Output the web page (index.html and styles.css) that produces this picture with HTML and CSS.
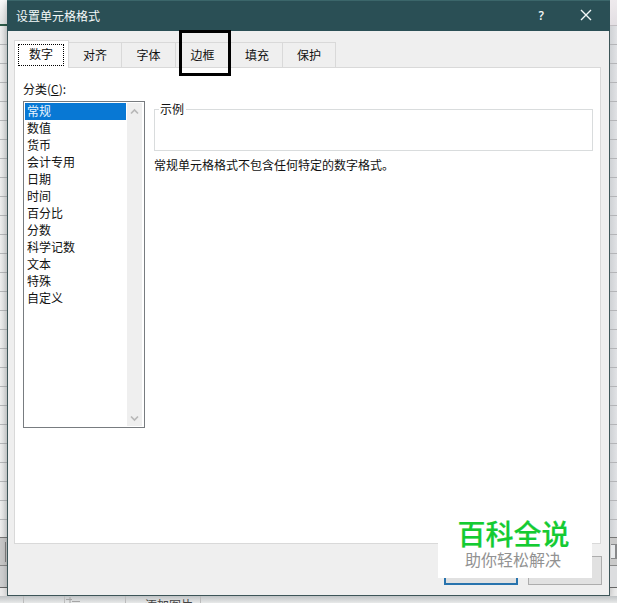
FILE: index.html
```html
<!DOCTYPE html>
<html lang="zh-CN">
<head>
<meta charset="utf-8">
<title>设置单元格格式</title>
<link rel="stylesheet" href="styles.css">
</head>
<body>
<div class="workspace">
  <div class="sheet sheet-left"><div class="ribbon"></div><div class="rows"></div><div class="scroll-area"><i class="grip"></i></div><div class="below"></div></div>
  <main class="dialog">
    <header class="titlebar">
      <span class="title">设置单元格格式</span>
      <span class="help">?</span>
      <svg class="close" width="12" height="12" viewBox="0 0 12 12"><path d="M1 1 11 11M11 1 1 11"/></svg>
    </header>
    <nav class="tabs">
      <span class="tab active"><span class="focus">数字</span></span>
      <span class="tab">对齐</span>
      <span class="tab">字体</span>
      <span class="tab marked">边框</span>
      <span class="tab">填充</span>
      <span class="tab">保护</span>
    </nav>
    <section class="panel">
      <div class="category">
        <div class="label">分类(<u>C</u>):</div>
        <div class="listbox">
          <ul>
            <li class="selected">常规</li><li>数值</li><li>货币</li><li>会计专用</li><li>日期</li><li>时间</li><li>百分比</li><li>分数</li><li>科学记数</li><li>文本</li><li>特殊</li><li>自定义</li>
          </ul>
          <div class="scrollbar">
            <svg width="9" height="7" viewBox="0 0 9 7"><path d="M1 5.5 4.5 2 8 5.5"/></svg>
            <svg width="9" height="7" viewBox="0 0 9 7"><path d="M1 1.5 4.5 5 8 1.5"/></svg>
          </div>
        </div>
      </div>
      <div class="details">
        <div class="sample"><span class="legend">示例</span></div>
        <p>常规单元格格式不包含任何特定的数字格式。</p>
      </div>
    </section>
    <footer class="actions"><span class="button primary"></span><span class="button"></span></footer>
  </main>
  <div class="sheet sheet-right"><div class="ribbon"></div><div class="rows"></div><div class="scroll-area"><i class="grip"></i></div><div class="below"></div></div>
  <div class="taskbar"><i class="cell first"></i><i class="cell second"></i><i class="cell third"><svg width="16" height="7" viewBox="0 0 16 7"><path d="M1 3.5H7M5 1V7M7 5.5H15"/></svg></i><span>添加图片</span></div>
  <div class="watermark"><strong>百科全说</strong><span>助你轻松解决</span></div>
</div>
</body>
</html>
```

FILE: styles.css
```css
*, *::after { box-sizing: border-box; }
body {
  margin: 0;
  font: 12px/17px "Noto Sans CJK SC", sans-serif;
  color: #111;
  overflow: hidden;
}
.workspace {
  position: relative;
  width: 617px;
  height: 603px;
  display: grid;
  grid-template-columns: 7px 603px 7px;
  grid-template-rows: 596px 7px;
  background: #ececec;
}
.sheet { display: flex; flex-direction: column; }
.ribbon { height: 26px; background: linear-gradient(#fafafa, #e2e4e4); border-bottom: 2px solid #2c5a48; }
.rows {
  height: 511px;
  background: repeating-linear-gradient(to bottom, transparent 0 18px, #b6b8ba 18px 19px), linear-gradient(to right, #efefef, #dcdedf);
}
.sheet-right .ribbon { background: linear-gradient(#eeeaed, #e3dfe3); border-bottom: 1px solid #c2bec2; }
.sheet-right .rows {
  background: repeating-linear-gradient(to bottom, transparent 0 18px, #b4b5b8 18px 19px), linear-gradient(to right, #cfd2d5, #e1e2e5);
}
.scroll-area {
  display: flex;
  justify-content: flex-end;
  height: 29px;
  padding: 4px 1px 0 0;
  background: #c9c9c9;
  border-top: 1px solid #777;
  border-bottom: 1px solid #888;
}
.grip { width: 1px; height: 20px; background: #828282; }
.sheet-right .scroll-area { padding-right: 0; }
.sheet-right .grip { width: 6px; height: 15px; margin-top: 2px; background: #e8eaec; border: 1px solid #88898b; border-left: 0; border-right: 2px solid #88898b; }
.below { height: 22px; background: #cfd0d1; border-bottom: 1px solid #666; }
.sheet-right .below { background: #dcdddf; }
.dialog {
  display: flex;
  flex-direction: column;
  background: #efefef;
  border: 1px solid #3d5558;
  border-top: 0;
  box-shadow: 0 2px 7px #0004;
}
.titlebar {
  height: 31px;
  margin: 0 -1px;
  padding: 0 18px 2px 9px;
  display: flex;
  align-items: center;
  color: #f4f9f9;
  background: #2a4f55;
  border-top: 1px solid #3b666a;
}
.title { flex: 1; }
.help { margin-right: 36px; font: 600 12px/17px "Open Sans", sans-serif; }
.close { fill: none; stroke: #f4f9f9; stroke-width: 1.4; }
.tabs { display: flex; height: 37px; padding: 9px 0 0 6px; align-items: flex-end; }
.tab {
  height: 26px;
  width: 54px;
  border: 1px solid #d9d9d9;
  border-left: 0;
  text-align: center;
  line-height: 24px;
}
.tab:nth-child(2) { width: 53px; }
.tab:nth-child(5), .tab:nth-child(6) { width: 53px; }
.tab:nth-child(5) { padding-left: 2px; }
.tab.active {
  position: relative;
  z-index: 1;
  width: 55px;
  height: 28px;
  padding: 3px 4px 0 3px;
  background: #fff;
  border-left: 1px solid #d9d9d9;
  border-bottom: 0;
}
.focus { display: block; height: 22px; line-height: 18px; border: 1px dotted #000; }
.marked { position: relative; }
.marked::after { content: ""; position: absolute; left: 3px; top: -13px; width: 52px; height: 46px; border: 3px solid #000; }
.panel {
  display: flex;
  gap: 9px;
  width: 587px;
  height: 477px;
  margin: -1px 0 0 6px;
  padding: 12px 7px 0 8px;
  background: #fff;
  border: 1px solid #d9d9d9;
}
.category { width: 122px; }
.label { height: 21px; line-height: 17px; }
.listbox { display: flex; height: 327px; padding: 1px; border: 1px solid #787c80; }
ul { list-style: none; width: 101px; margin: 0 1px 0 0; padding: 0; }
li { height: 17px; padding-left: 2px; line-height: 16px; }
.selected { color: #e9f5ff; background: #0878d4; }
.scrollbar {
  width: 15px;
  padding: 5px 0 4px;
  display: flex;
  flex-direction: column;
  justify-content: space-between;
  align-items: center;
  background: #efefef;
}
.scrollbar path { fill: none; stroke: #b8b8b8; stroke-width: 1.7; }
.details { flex: 1; padding-top: 29px; }
.sample { height: 42px; border: 1px solid #d9dcdd; }
.legend { display: block; width: 27px; margin: -10px 0 0 4px; padding-left: 1px; background: #fff; }
p { margin: 5px 0 0; }
.actions { display: flex; justify-content: flex-end; gap: 10px; padding: 12px 7px 0 0; }
.button { width: 74px; height: 29px; background: #e1e1e1; border: 1px solid #adadad; }
.primary { border: 2px solid #2873ad; }
.taskbar { grid-column: 1 / -1; display: flex; overflow: hidden; background: linear-gradient(#bfc3c5, #e8e9e9); color: #444; }
.cell { height: 7px; border-right: 1px solid #bbb; }
.cell svg { display: block; fill: none; stroke: #a5a5a5; }
.first { width: 24px; }
.second { width: 41px; }
.third { width: 61px; }
.taskbar span { width: 75px; padding-left: 19px; line-height: 17px; border-right: 1px solid #bbb; }
.watermark {
  position: absolute;
  left: 438px;
  top: 514px;
  width: 154px;
  height: 64px;
  display: flex;
  flex-direction: column;
  align-items: center;
  background: #fff;
}
.watermark strong { font-size: 28px; line-height: 38px; font-weight: 500; color: #14cb32; -webkit-text-stroke: 0.2px #14cb32; margin-left: -3px; }
.watermark span { font-size: 16px; line-height: 16px; color: #929292; margin: -1px 0 0 -4px; }
```
